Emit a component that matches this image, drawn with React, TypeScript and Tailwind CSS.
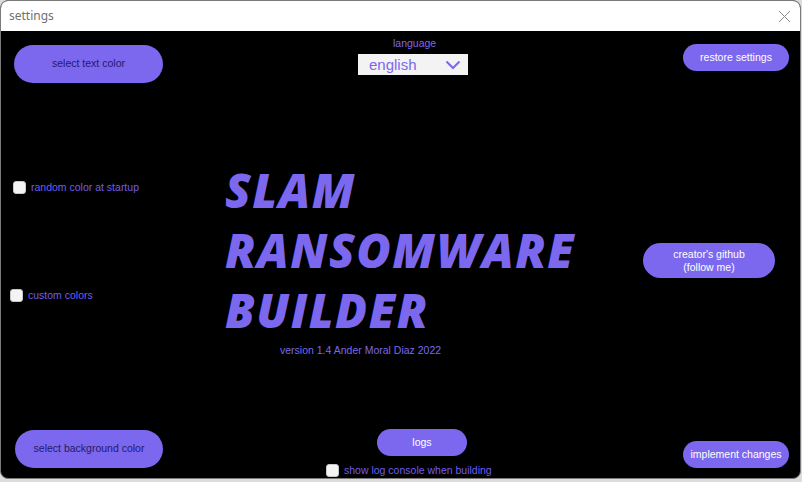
import React from "react";

const sans = { fontFamily: '"Liberation Sans", Arial, sans-serif' };

function Check({ label, className }: { label: string; className?: string }) {
  return (
    <div className={"flex items-center " + (className ?? "")}>
      <div className="w-[13px] h-[13px] rounded-[3px] bg-[#f4f4f4] border border-[#c8c8c8] shrink-0" />
      <span className="ml-[5px] text-[10.5px] leading-[13px] text-[#6f5ef0] whitespace-nowrap">{label}</span>
    </div>
  );
}

export default function App() {
  return (
    <div className="w-[802px] h-[482px] bg-[#dcdcdc] overflow-hidden" style={sans}>
      <div className="w-[801px] h-[479px] rounded-[8px] border border-[#7a7a7a] overflow-hidden flex flex-col bg-black">
        {/* title bar */}
        <div className="h-[30px] bg-white flex items-center justify-between pl-[8px] pr-[9px] shrink-0">
          <span className="text-[12px] text-[#707070]" style={{ fontFamily: '"Noto Sans", "Liberation Sans", sans-serif' }}>settings</span>
          <svg width="13" height="13" viewBox="0 0 13 13">
            <path d="M1 1 L12 12 M12 1 L1 12" stroke="#8a8a8a" strokeWidth="1" />
          </svg>
        </div>
        {/* body */}
        <div className="flex-1 flex flex-row">
          {/* left column */}
          <div className="w-[199px] flex flex-col">
            <button className="mt-[14px] ml-[13px] w-[149px] h-[38px] rounded-full bg-[#7b68ee] text-[10.5px] text-[#24186a]">
              select text color
            </button>
            <Check label="random color at startup" className="mt-[98px] ml-[12px]" />
            <Check label="custom colors" className="mt-[95px] ml-[9px]" />
            <button className="mt-[128px] ml-[14px] w-[148px] h-[38px] rounded-full bg-[#7b68ee] text-[10.5px] text-[#24186a]">
              select background color
            </button>
          </div>
          {/* center column */}
          <div className="w-[431px] flex flex-col">
            <div className="mt-[6px] ml-[193px] text-[10.5px] leading-[13px] text-[#7b68ee]">language</div>
            <div className="mt-[4px] ml-[158px] w-[110px] h-[21px] bg-[#f3f3f3] flex items-center justify-between pl-[11px] pr-[7px]">
              <span className="text-[15px] leading-[18px] text-[#7b68ee]">english</span>
              <svg width="16" height="10" viewBox="0 0 16 10">
                <path d="M1.5 1.5 L8 8 L14.5 1.5" stroke="#7b68ee" strokeWidth="2" fill="none" />
              </svg>
            </div>
            <div
              className="mt-[85px] ml-[25px] text-[47px] leading-[60px] font-extrabold italic text-[#7b68ee] tracking-[1.5px]"
              style={{ fontFamily: '"Open Sans", "DejaVu Sans", sans-serif' }}
            >
              <div>SLAM</div>
              <div>RANSOMWARE</div>
              <div>BUILDER</div>
            </div>
            <div className="mt-[4px] ml-[80px] text-[10.5px] leading-[13px] text-[#7b68ee] whitespace-nowrap">
              version 1.4 Ander Moral Diaz 2022
            </div>
            <button className="mt-[72px] ml-[177px] w-[90px] h-[27px] rounded-full bg-[#7b68ee] text-[10.5px] text-white">
              logs
            </button>
            <Check label="show log console when building" className="mt-[8px] ml-[126px]" />
          </div>
          {/* right column */}
          <div className="flex-1 flex flex-col">
            <button className="mt-[13px] ml-[52px] w-[106px] h-[27px] rounded-full bg-[#7b68ee] text-[10.5px] text-white">
              restore settings
            </button>
            <button className="mt-[172px] ml-[12px] w-[132px] h-[35px] rounded-full bg-[#7b68ee] text-[10.5px] leading-[13px] text-white">
              creator's github
              <br />
              (follow me)
            </button>
            <button className="mt-[163px] ml-[52px] w-[106px] h-[27px] rounded-full bg-[#7b68ee] text-[10.5px] text-white">
              implement changes
            </button>
          </div>
        </div>
      </div>
    </div>
  );
}
